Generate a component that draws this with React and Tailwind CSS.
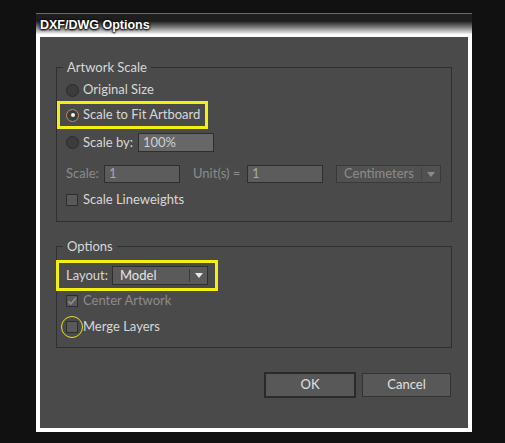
import React from "react";

function Radio({ checked }) {
  return (
    <span
      className={
        "relative flex h-[13px] w-[13px] shrink-0 items-center justify-center rounded-full border bg-[#3c3c3c] " +
        (checked ? "border-[#c98a4c]" : "border-[#2a2a2a]")
      }
    >
      {checked && <span className="h-[4px] w-[4px] rounded-full bg-[#f2f2f2]" />}
    </span>
  );
}

function Check({ checked, disabled }) {
  return (
    <span className="flex h-[12px] w-[12px] shrink-0 items-center justify-center border border-[#2e2e2e] bg-[#5a5a5a]">
      {checked && (
        <svg width="11" height="10" viewBox="0 0 11 10">
          <path
            d="M1.5 5.5 L4.2 8.3 L9.8 1.5"
            fill="none"
            stroke={disabled ? "#8a8a8a" : "#e0e0e0"}
            strokeWidth="2"
          />
        </svg>
      )}
    </span>
  );
}

function Arrow({ color }) {
  return (
    <svg width="8" height="5" viewBox="0 0 8 5">
      <path d="M0 0 H8 L4 5 Z" fill={color} />
    </svg>
  );
}

function Group({ title, children, className }) {
  return (
    <div className={"relative border border-[#2f2f2f] pl-[9px] pr-[10px] " + className}>
      <span className="absolute -top-[9px] left-[6px] bg-[#4a4a4a] px-[4px] leading-4 text-[#d8d8d8]">
        {title}
      </span>
      {children}
    </div>
  );
}

export default function App() {
  return (
    <div
      className="h-[443px] w-[505px] bg-[#111111] pl-[36px] pt-[13px]"
      style={{ fontFamily: "Lato, 'Open Sans', sans-serif", fontSize: "13px" }}
    >
      <div className="flex h-[419px] w-[436px] flex-col border-t border-[#6a6a6a] bg-white px-[4px] pb-[4px]">
        <div className="-mx-[4px] flex h-[23px] items-center bg-gradient-to-b from-[#1e1e1e] from-[30%] to-white to-[90%] pl-[4px]">
          <span
            className="text-[12.5px] font-bold text-white"
            style={{
              fontFamily: "'Liberation Sans', sans-serif",
              textShadow: "0 0 2px #000, 0 0 3px #000, 0 1px 2px #000",
            }}
          >
            DXF/DWG Options
          </span>
        </div>
        <div className="flex flex-1 flex-col bg-[#4a4a4a] px-4 pt-[30px]">
          <Group title="Artwork Scale" className="pt-[12px] pb-[13px]">
            <div className="flex h-5 items-center gap-[4px] text-[#d8d8d8]">
              <Radio />
              <span>Original Size</span>
            </div>
            <div className="-ml-[9px] mt-[1px] flex h-[28px] w-[151px] items-center gap-[4px] border-[3px] border-[#f3ef12] pl-[6px] text-[#d8d8d8]">
              <Radio checked />
              <span>Scale to Fit Artboard</span>
            </div>
            <div className="mt-[4px] flex h-[19px] items-center text-[#d8d8d8]">
              <Radio />
              <span className="ml-[4px] w-[50px] whitespace-nowrap">Scale by:</span>
              <div className="ml-[5px] flex h-[19px] w-[76px] items-center border border-[#2e2e2e] bg-[#676767] pl-[4px] text-[#d0d0d0]">
                100%
              </div>
            </div>
            <div className="mt-[13px] flex h-[18px] items-center text-[#8c8c8c]">
              <span className="w-[38px]">Scale:</span>
              <div className="flex h-[18px] w-[76px] items-center border border-[#2e2e2e] bg-[#5c5c5c] pl-[4px] text-[#a8a8a8]">
                1
              </div>
              <span className="ml-[13px] w-[54px] whitespace-nowrap">Unit(s) =</span>
              <div className="flex h-[18px] w-[76px] items-center border border-[#2e2e2e] bg-[#5c5c5c] pl-[4px] text-[#a8a8a8]">
                1
              </div>
              <div className="ml-[13px] flex h-[18px] w-[105px] items-center border border-[#393939] bg-[#515151]">
                <span className="flex-1 pl-[7px]">Centimeters</span>
                <span className="h-[14px] w-px bg-[#444]" />
                <span className="flex w-[18px] justify-center">
                  <Arrow color="#8c8c8c" />
                </span>
              </div>
            </div>
            <div className="mt-[9px] flex h-4 items-center gap-[5px] text-[#d8d8d8]">
              <Check />
              <span>Scale Lineweights</span>
            </div>
          </Group>

          <Group title="Options" className="mt-[24px] pt-[13px] pb-[12px]">
            <div className="-ml-[10px] flex h-[31px] w-[162px] items-center border-[3px] border-[#f3ef12] pl-[7px] text-[#d8d8d8]">
              <span className="w-[46px]">Layout:</span>
              <div className="flex h-[19px] w-[96px] items-center border border-[#2e2e2e] bg-[#5a5a5a]">
                <span className="flex-1 pl-[7px] text-[#e4e4e4]">Model</span>
                <span className="h-[13px] w-px bg-[#3a3a3a]" />
                <span className="flex w-[17px] justify-center">
                  <Arrow color="#e8e8e8" />
                </span>
              </div>
            </div>
            <div className="mt-[2px] flex h-4 items-center gap-[5px] text-[#8c8c8c]">
              <Check checked disabled />
              <span>Center Artwork</span>
            </div>
            <div className="mt-[10px] flex h-4 items-center gap-[5px] text-[#d8d8d8]">
              <span className="relative flex">
                <Check />
                <span className="absolute -left-[5px] -top-[5px] h-[22px] w-[22px] rounded-full border border-[#e6e21a]" />
              </span>
              <span>Merge Layers</span>
            </div>
          </Group>

          <div className="mt-[24px] flex items-start justify-end gap-[6px] pr-[1px] text-[#e0e0e0]">
            <button className="flex h-[26px] w-[92px] items-center justify-center border-2 border-[#2a2a2a] bg-[#585858]">
              OK
            </button>
            <button className="mt-[1px] flex h-[24px] w-[89px] items-center justify-center border border-[#333] bg-[#585858]">
              Cancel
            </button>
          </div>
        </div>
      </div>
    </div>
  );
}
